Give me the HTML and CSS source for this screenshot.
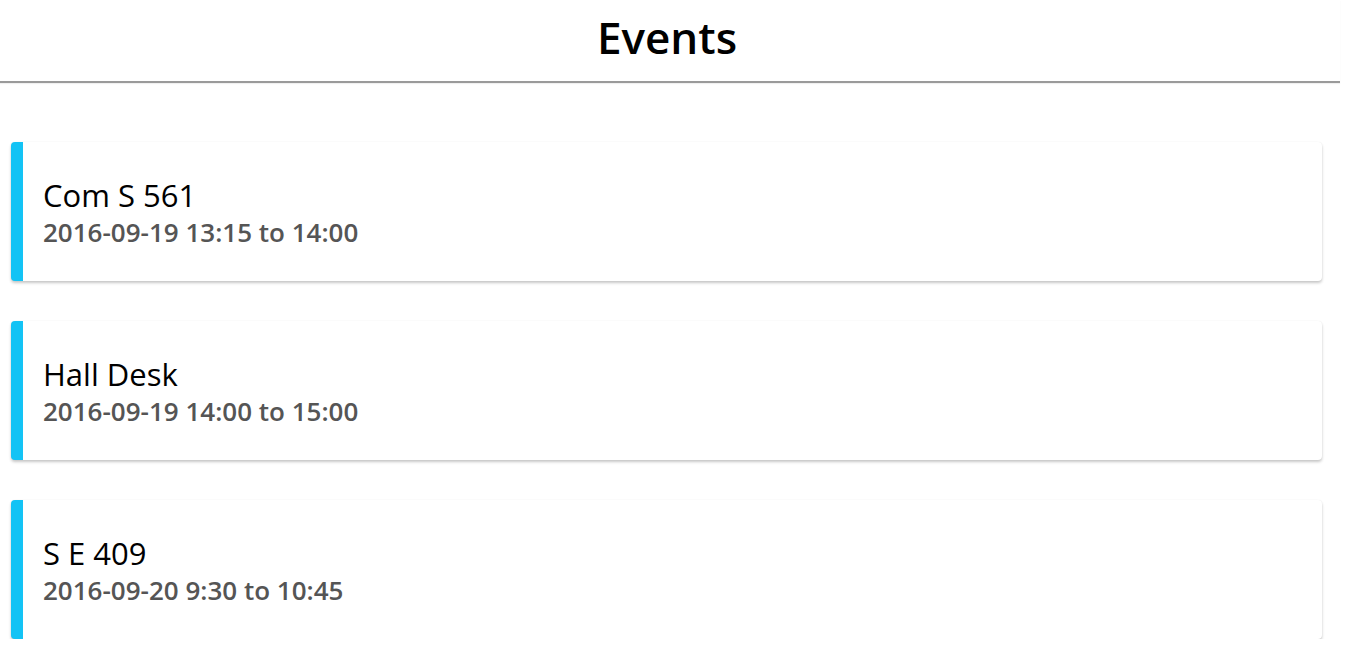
FILE: index.html
```html
<!DOCTYPE html>
<html>
<head>
<meta charset="utf-8">
<link rel="stylesheet" href="styles.css">
</head>
<body>
<div class="page">
  <header class="header"><h1 class="title">Events</h1></header>
  <main class="list">
    <div class="card">
      <div class="card-body">
        <div class="name">Com S 561</div>
        <div class="time">2016-09-19 13:15 to 14:00</div>
      </div>
    </div>
    <div class="card">
      <div class="card-body">
        <div class="name">Hall Desk</div>
        <div class="time">2016-09-19 14:00 to 15:00</div>
      </div>
    </div>
    <div class="card">
      <div class="card-body">
        <div class="name">S E 409</div>
        <div class="time">2016-09-20 9:30 to 10:45</div>
      </div>
    </div>
  </main>
</div>
</body>
</html>
```

FILE: styles.css
```css
html, body {
  margin: 0;
  padding: 0;
  background: #fff;
  font-family: "Open Sans", "Noto Sans", sans-serif;
  overflow: hidden;
}
.page {
  width: 1340px;
}
.header {
  height: 81px;
  border-bottom: 2px solid #9a9a9a;
  box-shadow: 0 1px 1px rgba(0,0,0,0.06);
  display: flex;
  justify-content: center;
  align-items: center;
}
.title {
  margin: 0;
  font-size: 44px;
  font-weight: 600;
  color: #000;
  padding-bottom: 8px;
  padding-right: 6px;
  line-height: 56px;
}
.list {
  display: flex;
  flex-direction: column;
  gap: 40px;
  padding: 59px 18px 0 11px;
}
.card {
  height: 139px;
  background: #fff;
  border-left: 12px solid #13c3f5;
  border-radius: 4px;
  box-shadow: 0 2px 3px rgba(0,0,0,0.22), 0 0 1px rgba(0,0,0,0.08);
  display: flex;
  align-items: center;
}
.card-body {
  padding-left: 20px;
  padding-top: 2px;
}
.name {
  font-size: 31px;
  font-weight: 400;
  color: #000;
  line-height: 38px;
}
.time {
  font-size: 26px;
  font-weight: 600;
  color: #555;
  line-height: 36px;
}
```
